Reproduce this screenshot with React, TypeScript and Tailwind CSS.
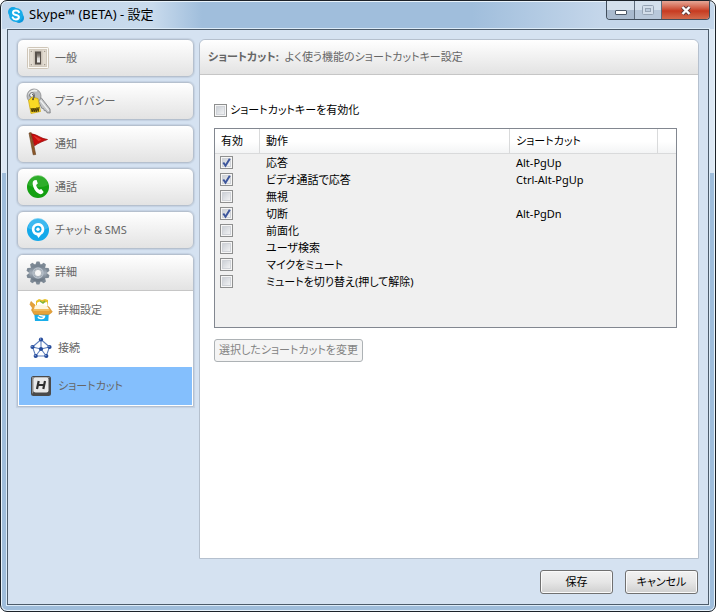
import React, { useState } from 'react';

interface Category {
  id: string;
  label: string;
  icon: React.ReactNode;
}

interface Hotkey {
  name: string;
  keys: string;
  enabled: boolean;
}

const SkypeLogo = () => (
  <svg viewBox="0 0 16 16" className="w-4 h-4 shrink-0" aria-hidden="true">
    <circle cx="5" cy="5" r="5" fill="#12a5e8" />
    <circle cx="11" cy="11" r="5" fill="#0b98dd" />
    <circle cx="8" cy="8" r="7" fill="#18ace9" />
    <path d="M11 5.200C10.400 4 9.200 3.500 7.900 3.500 6.300 3.500 5 4.300 5 5.700c0 3 5.900 1.600 5.900 4.400 0 1.500-1.300 2.400-3 2.400-1.500 0-2.700-.7-3.200-2" fill="none" stroke="#fff" strokeWidth="2" strokeLinecap="round" />
  </svg>
);

const SwitchIcon = () => (
  <svg viewBox="0 0 24 24" className="w-6 h-6 shrink-0" aria-hidden="true">
    <defs>
      <linearGradient id="lever" x1="0" y1="0" x2="0" y2="1">
        <stop offset="0" stopColor="#5b544d" />
        <stop offset=".35" stopColor="#8d867e" />
        <stop offset=".6" stopColor="#d9d6d2" />
        <stop offset="1" stopColor="#f3f2f0" />
      </linearGradient>
    </defs>
    <rect x="1.500" y="1.500" width="21" height="21" rx="1" fill="#fbf9f5" stroke="#cfc6b8" />
    <rect x="3.500" y="3.500" width="17" height="17" fill="#e2dbd0" stroke="#d2cabd" />
    <rect x="7.500" y="4.500" width="9" height="15" fill="#cbc3b7" />
    <rect x="9" y="5.500" width="6" height="13" fill="#57504a" />
    <rect x="11" y="6.500" width="3" height="10" fill="url(#lever)" />
    <g fill="#8b8378">
      <circle cx="5.300" cy="5.300" r=".6" />
      <circle cx="18.700" cy="5.300" r=".6" />
      <circle cx="5.300" cy="18.700" r=".6" />
      <circle cx="18.700" cy="18.700" r=".6" />
    </g>
  </svg>
);

const KeysIcon = () => (
  <svg viewBox="0 0 24 24" className="w-6 h-6 shrink-0 overflow-visible" aria-hidden="true">
    <path d="M12 11l3-2.500 9 11.500.2 4-3.200-.2-1-2-1.800-.2-.6-2-1.900-.4z" fill="#c4c6c8" stroke="#77797c" strokeWidth=".8" />
    <path d="M14.500 11.500l8.300 10.300" stroke="#f2f3f4" strokeWidth="1.200" />
    <circle cx="8" cy="7" r="7" fill="#b9bbbd" stroke="#8a8c8e" strokeWidth=".8" />
    <path d="M3 5.500a6 6 0 0 1 8-3.500" fill="none" stroke="#eceded" strokeWidth="1.800" />
    <circle cx="6" cy="6" r="2.400" fill="#f4f4f4" stroke="#66686a" strokeWidth=".9" />
    <path d="M2.500 11.500L6 8l6 1.500 2.500 13-9.500 2z" fill="#f9d924" stroke="#caa30c" strokeWidth=".7" />
    <circle cx="7" cy="10.300" r="1" fill="#705b13" />
    <path d="M7 10C9 7.500 8 5.500 6 5.500" fill="none" stroke="#55575a" strokeWidth="1.200" />
    <path d="M5 19l1.200 4 .8-4 1.200 4 .8-4 1.200 4 .8-4.500 1.200 4 .8-4.500" fill="none" stroke="#4b3b05" />
  </svg>
);

const FlagIcon = () => (
  <svg viewBox="0 0 24 24" className="w-6 h-6 shrink-0" aria-hidden="true">
    <path d="M3 1l2.200-.4L9.700 22.500l-2.500.3z" fill="#8d5a2c" stroke="#633a17" strokeWidth=".6" />
    <path d="M5.500 1.800C11 2.200 15 6.800 21.500 7.500c-4.500 1.700-9 3.500-13 6.300z" fill="#c90d0d" stroke="#930707" strokeWidth=".7" />
    <path d="M7.500 3.800c3 .8 5 2.500 8 4l-3 1.500z" fill="#e0332b" />
  </svg>
);

const CallIcon = () => (
  <svg viewBox="0 0 24 24" className="w-6 h-6 shrink-0" aria-hidden="true">
    <circle cx="12" cy="12" r="11" fill="#14a012" />
    <path d="M2 10a10 10 0 0 1 20 0c-5 3-15 3-20 0z" fill="#3fb53a" opacity=".6" />
    <path d="M8.300 5.300l2.300-.4 1.200 3.600-1.700 1.400c.5 2 1.500 3.600 3.200 4.900l2-.8 2.400 2.900-1.500 1.900c-1 .7-2.400.5-3.500-.2-3.300-2-5.500-5.400-6-9.400-.2-1.700.2-3.200 1.600-3.900z" fill="#fff" />
  </svg>
);

const ChatIcon = () => (
  <svg viewBox="0 0 24 24" className="w-6 h-6 shrink-0" aria-hidden="true">
    <circle cx="12" cy="12" r="11" fill="#14a9ea" />
    <path d="M2 10a10 10 0 0 1 20 0c-5 3-15 3-20 0z" fill="#4fc1f2" opacity=".7" />
    <path d="M12 5a6.300 6.300 0 0 1 3 11.800L12.500 20l-1.500-2.500A6.300 6.300 0 0 1 12 5z" fill="#fff" />
    <circle cx="12" cy="11.300" r="3.500" fill="#14a9ea" />
    <circle cx="12" cy="11.300" r="1.700" fill="#fff" />
  </svg>
);

const GearIcon = () => (
  <svg viewBox="0 0 24 24" className="w-6 h-6 shrink-0" aria-hidden="true">
    <defs>
      <linearGradient id="steel" x1="0" y1="0" x2="0" y2="1">
        <stop offset="0" stopColor="#778491" />
        <stop offset=".5" stopColor="#a3adb8" />
        <stop offset="1" stopColor="#6f7b88" />
      </linearGradient>
    </defs>
    <g fill="#7d8995">
      {[0, 36, 72, 108, 144, 180, 216, 252, 288, 324].map(deg => (
        <path key={deg} d="M9 4.500L10.600.4h2.800L15 4.500z" transform={`rotate(${deg} 12 12)`} />
      ))}
    </g>
    <circle cx="12" cy="12" r="6.300" fill="none" stroke="url(#steel)" strokeWidth="5.200" />
    <circle cx="12" cy="12" r="5" fill="none" stroke="#b7c0ca" strokeWidth="1.300" />
    <circle cx="12" cy="12" r="3.600" fill="#f6f6f6" stroke="#87929e" strokeWidth=".6" />
  </svg>
);

const BoxIcon = () => (
  <svg viewBox="0 0 24 24" className="w-6 h-6 shrink-0" aria-hidden="true">
    <path d="M5 13h15l-.7 10H6z" fill="#19aeea" />
    <path d="M15.500 17.500c.5 3.500-5.500 4-6.500 1.200M10 16.800c1.500 1.500 3 1 5 1.500" fill="none" stroke="#fff" strokeWidth="1.600" />
    <path d="M7 3l3-2 3 1 3-1 3 1v6H7z" fill="#e9c12a" />
    <path d="M8 5c2-2 5-2 6 0l4-1 1 5H8z" fill="#fff" />
    <path d="M11 3l3 2 2-2" fill="none" stroke="#7eb338" strokeWidth="1.500" />
    <path d="M6 7L2 3.500l-1 3L3.500 10l-1 2L5 16.500h15l3.300-2.500L20 9l-2-1-2 2H8z" fill="#e6a23a" stroke="#d08e27" strokeWidth=".6" />
    <path d="M6 7.500c3-1 9-1 12.500 1L20 11H5z" fill="#fff6df" />
    <path d="M4.500 12h16" stroke="#f3c66c" strokeWidth="1.300" />
  </svg>
);

const NetworkIcon = () => (
  <svg viewBox="0 0 24 24" className="w-6 h-6 shrink-0" aria-hidden="true">
    <path d="M12 3.500L20.500 11l-3.200 9H6.700L3.500 11zM12 13V3.500M12 13l8.500-2M12 13l5.300 7M12 13l-5.300 7M12 13l-8.500-2" fill="none" stroke="#5f80bd" strokeWidth="1.100" />
    <g fill="#244a9a">
      <circle cx="12" cy="3.500" r="2.100" />
      <circle cx="20.500" cy="11" r="2.100" />
      <circle cx="17.300" cy="20" r="2.100" />
      <circle cx="6.700" cy="20" r="2.100" />
      <circle cx="3.500" cy="11" r="2.100" />
      <circle cx="12" cy="13" r="2.100" />
    </g>
    <g fill="#8fa9db">
      <circle cx="11.500" cy="3" r=".7" />
      <circle cx="20" cy="10.500" r=".7" />
      <circle cx="16.800" cy="19.500" r=".7" />
      <circle cx="6.200" cy="19.500" r=".7" />
      <circle cx="3" cy="10.500" r=".7" />
    </g>
  </svg>
);

const KeyCapIcon = () => (
  <svg viewBox="0 0 24 24" className="w-6 h-6 shrink-0" aria-hidden="true">
    <rect x="2" y="2" width="20" height="20" rx="2.500" fill="#4a4a4a" />
    <path d="M3 3h18l-2.500 2H5v12.500L3 20z" fill="#8f8f8f" />
    <rect x="4.500" y="3.500" width="15" height="15" rx="2" fill="#e9e9e9" />
    <path d="M9.700 7L8 15M16 7l-1.700 8M9 11h6" stroke="#2f2f2f" strokeWidth="2.200" />
  </svg>
);

const CATEGORIES: Category[] = [
  { id: 'general', label: '一般', icon: <SwitchIcon /> },
  { id: 'privacy', label: 'プライバシー', icon: <KeysIcon /> },
  { id: 'notifications', label: '通知', icon: <FlagIcon /> },
  { id: 'calls', label: '通話', icon: <CallIcon /> },
  { id: 'chat', label: 'チャット & SMS', icon: <ChatIcon /> },
];

const ADVANCED: Category[] = [
  { id: 'advanced', label: '詳細設定', icon: <BoxIcon /> },
  { id: 'connection', label: '接続', icon: <NetworkIcon /> },
  { id: 'hotkeys', label: 'ショートカット', icon: <KeyCapIcon /> },
];

const HOTKEYS: Hotkey[] = [
  { name: '応答', keys: 'Alt-PgUp', enabled: true },
  { name: 'ビデオ通話で応答', keys: 'Ctrl-Alt-PgUp', enabled: true },
  { name: '無視', keys: '', enabled: false },
  { name: '切断', keys: 'Alt-PgDn', enabled: true },
  { name: '前面化', keys: '', enabled: false },
  { name: 'ユーザ検索', keys: '', enabled: false },
  { name: 'マイクをミュート', keys: '', enabled: false },
  { name: 'ミュートを切り替え(押して解除)', keys: '', enabled: false },
];

interface CheckBoxProps {
  id: string;
  label?: string;
  checked: boolean;
  onChange: () => void;
}

const CheckBox: React.FC<CheckBoxProps> = ({ id, label, checked, onChange }) => (
  <span className="relative block w-[13px] h-[13px] shrink-0">
    <input
      id={id}
      type="checkbox"
      aria-label={label}
      checked={checked}
      onChange={onChange}
      className="peer block w-[13px] h-[13px] appearance-none border border-[#8e8f8f] bg-linear-to-br from-[#c3c8cf] to-[#fbfbfb] shadow-[inset_0_0_0_1px_#f6f6f6,inset_0_0_0_2px_#d0d3d8]"
    />
    <svg viewBox="0 0 13 13" className="absolute inset-0 hidden peer-checked:block pointer-events-none" aria-hidden="true">
      <path d="M3.300 6.500l2.200 3.200L9.800 2.800" fill="none" stroke="#3d569c" strokeWidth="2" />
    </svg>
  </span>
);

const App: React.FC = () => {
  const [page, setPage] = useState('hotkeys');
  const [hotkeysOn, setHotkeysOn] = useState(false);
  const [hotkeys, setHotkeys] = useState<Hotkey[]>(HOTKEYS);

  const toggle = (idx: number) => {
    setHotkeys(hotkeys.map((h, i) => (i === idx ? { ...h, enabled: !h.enabled } : h)));
  };

  return (
    <div className="min-h-screen flex flex-col bg-white font-['Noto_Sans','Noto_Sans_CJK_JP',sans-serif] text-[11px] text-black [font-feature-settings:'palt']">
      <div className="flex-1 flex flex-col rounded-[7px] border border-[#1c2229] bg-[linear-gradient(#dde8f4,#dde8f4_172px,#9fbddb_172px)] px-[6px] pb-[6px] shadow-[inset_0_0_0_1px_#e9f3fb] overflow-hidden">
        <header className="-mx-[5px] mt-px pl-[6px] pr-1 h-[27px] flex items-start justify-between rounded-t-[5px] bg-[linear-gradient(90deg,#c3d6ea,#c9dbed_150px,#a0bedc_200px,#a0bedc_66%,#c4d6ea_84%,#c4d6ea)]">
          <div className="flex items-center h-[26px] gap-[5px]">
            <SkypeLogo />
            <h1 className="text-[13px]">Skype™ (BETA) - 設定</h1>
          </div>
          <div className="flex h-[19px] -mt-px rounded-b-[4px] border border-t-0 border-[#414e5c] overflow-hidden">
            <button aria-label="最小化" className="w-7 flex justify-center items-center pt-1 border-r border-[#5d6b7a] bg-linear-to-b from-[#d4e0ec] from-50% to-[#a9bace] to-50%">
              <svg viewBox="0 0 12 5" className="w-3 h-[5px]"><rect x=".5" y=".5" width="11" height="4" rx=".5" fill="#fff" stroke="#4b5766" /></svg>
            </button>
            <button aria-label="最大化" disabled className="w-[27px] flex justify-center items-center border-r border-[#5d6b7a] bg-linear-to-b from-[#d4e0ec] from-50% to-[#b8c8da] to-50%">
              <svg viewBox="0 0 12 10" className="w-3 h-[10px]"><rect x=".5" y=".5" width="11" height="9" rx="1" fill="#d3deea" stroke="#96a4b4" /><rect x="3.500" y="3.500" width="5" height="3" fill="#bccbdc" stroke="#96a4b4" /></svg>
            </button>
            <button aria-label="閉じる" className="w-[47px] flex justify-center items-center bg-linear-to-b from-[#e5a696] via-[#c73a20] via-55% to-[#d36a4c]">
              <svg viewBox="0 0 12 11" className="w-3 h-[11px]"><path d="M2.500 2l7 7M9.500 2l-7 7" stroke="#5a3a3c" strokeWidth="4" /><path d="M2.500 2l7 7M9.500 2l-7 7" stroke="#fff" strokeWidth="2.400" /></svg>
            </button>
          </div>
        </header>

        <div className="flex-1 flex flex-col border border-[#4d5c6b] bg-[#d5e2f1] shadow-[0_0_0_1px_#dcebf8]">
          <div className="flex-1 flex gap-[5px] px-[9px] pt-[9px]">
            <nav className="w-[177px] shrink-0 flex flex-col gap-[5px] text-[#666]">
              {CATEGORIES.map(c => (
                <button key={c.id} className="h-[38px] pl-2 flex items-center gap-[5px] rounded-md border border-[#b5c0ce] bg-linear-to-b from-white to-[#e3e3e3] shadow-[0_0_1px_1px_#c4d1e1]">
                  {c.icon}
                  <span>{c.label}</span>
                </button>
              ))}
              <div className="rounded-t-md border border-[#b5c0ce] bg-white shadow-[0_0_1px_1px_#c4d1e1] overflow-hidden">
                <button className="w-full h-[36px] pl-2 flex items-center gap-[5px] border-b border-[#c6c6c6] bg-linear-to-b from-white to-[#e3e3e3]">
                  <GearIcon />
                  <span>詳細</span>
                </button>
                <div className="px-px pb-px">
                  {ADVANCED.map(c => (
                    <button key={c.id} onClick={() => setPage(c.id)} className={`w-full h-[38px] pl-[10px] flex items-center gap-[5px] ${page === c.id ? 'bg-[#84bffd]' : ''}`}>
                      {c.icon}
                      <span>{c.label}</span>
                    </button>
                  ))}
                </div>
              </div>
            </nav>

            <main className="flex-1 min-w-0 rounded-t-md border border-[#b5c0ce] bg-white">
              <div className="h-[35px] px-2 flex items-center gap-[6px] rounded-t-md border-b border-[#c6c6c6] bg-linear-to-b from-white to-[#e3e3e3] text-[#666]">
                <h2 className="font-bold">ショートカット:</h2>
                <p>よく使う機能のショートカットキー設定</p>
              </div>
              <div className="pl-[14px] pr-[21px] pt-[26px]">
                <div className="flex items-center gap-[3px] h-[18px]">
                  <CheckBox id="enable-hotkeys" checked={hotkeysOn} onChange={() => setHotkeysOn(!hotkeysOn)} />
                  <label htmlFor="enable-hotkeys">ショートカットキーを有効化</label>
                </div>
                <div className="mt-[9px] h-[200px] border border-[#828790] bg-[#f0f0f0]">
                  <table className="w-full table-fixed border-separate border-spacing-0 text-left">
                    <colgroup>
                      <col className="w-[45px]" />
                      <col />
                      <col className="w-[148px]" />
                      <col className="w-[18px]" />
                    </colgroup>
                    <thead>
                      <tr className="h-[25px] bg-linear-to-b from-white via-white via-50% to-[#f2f3f4]">
                        <th className="p-0 pl-[6px] font-normal border-r border-b border-[#d9dadb]">有効</th>
                        <th className="p-0 pl-[6px] font-normal border-r border-b border-[#d9dadb]">動作</th>
                        <th className="p-0 pl-[6px] font-normal border-r border-b border-[#d9dadb]">ショートカット</th>
                        <td className="p-0 border-b border-[#d9dadb]" />
                      </tr>
                    </thead>
                    <tbody className="leading-[17px]">
                      {hotkeys.map((h, i) => (
                        <tr key={h.name} className="h-[17px]">
                          <td className="p-0 pl-[5px]"><CheckBox id={`hotkey-${i}`} label={h.name} checked={h.enabled} onChange={() => toggle(i)} /></td>
                          <td className="p-0 pl-[6px] whitespace-nowrap">{h.name}</td>
                          <td className="p-0 pl-[6px] whitespace-nowrap">{h.keys}</td>
                          <td className="p-0" />
                        </tr>
                      ))}
                    </tbody>
                  </table>
                </div>
                <button disabled className="mt-[11px] h-[23px] px-1 rounded-[3px] border border-[#adb2b5] bg-[#f4f4f4] text-[#838383]">選択したショートカットを変更</button>
              </div>
            </main>
          </div>

          <footer className="flex justify-end gap-3 px-[10px] pt-[11px] pb-[10px]">
            <button className="w-[73px] h-6 rounded-[3px] border border-[#707070] bg-linear-to-b from-[#f2f2f2] via-[#e6e6e6] via-50% to-[#cfcfcf] shadow-[inset_0_0_0_1px_#fafafa]">保存</button>
            <button className="w-[73px] h-6 rounded-[3px] border border-[#707070] bg-linear-to-b from-[#f2f2f2] via-[#e6e6e6] via-50% to-[#cfcfcf] shadow-[inset_0_0_0_1px_#fafafa]">キャンセル</button>
          </footer>
        </div>
      </div>
    </div>
  );
};

export default App;
